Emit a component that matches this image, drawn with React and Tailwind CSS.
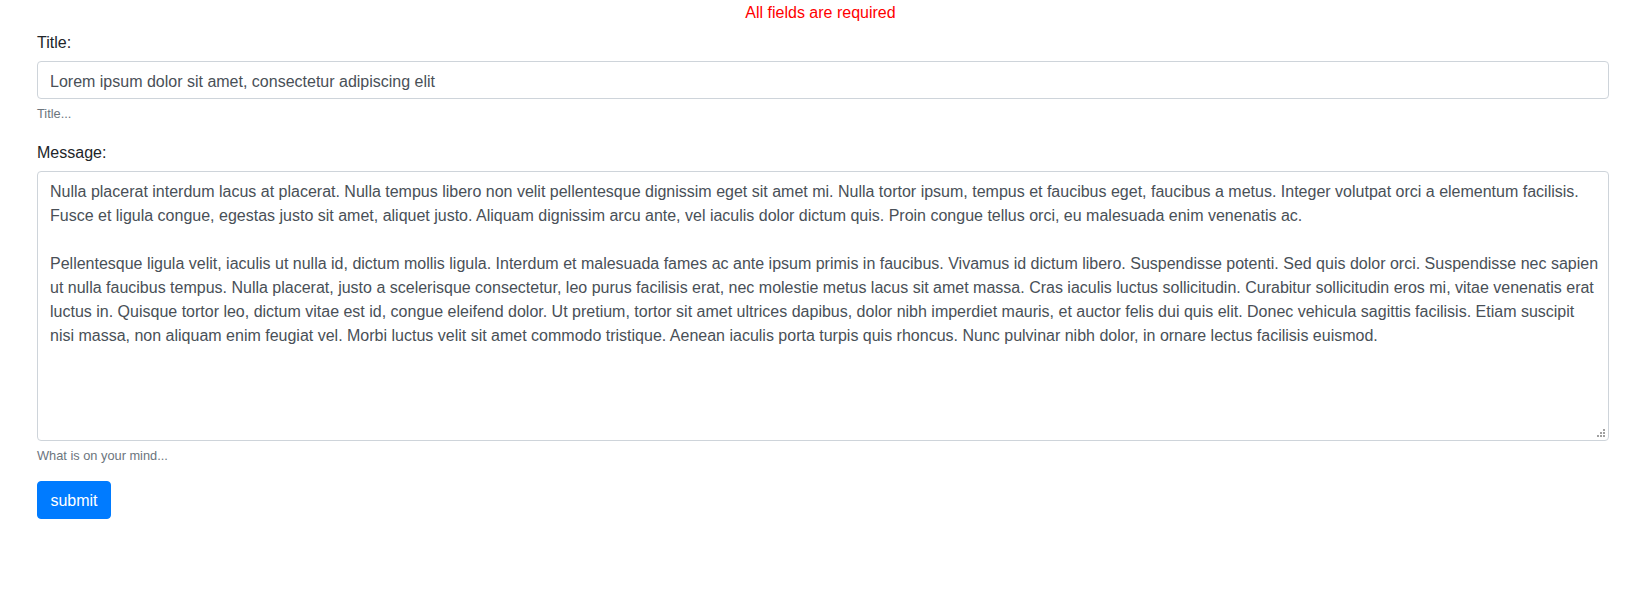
import { useState } from 'react';

const MESSAGE = [
    'Nulla placerat interdum lacus at placerat. Nulla tempus libero non velit pellentesque dignissim eget sit amet mi. Nulla tortor ipsum, tempus et faucibus eget, faucibus a metus. Integer volutpat orci a elementum facilisis.',
    'Fusce et ligula congue, egestas justo sit amet, aliquet justo. Aliquam dignissim arcu ante, vel iaculis dolor dictum quis. Proin congue tellus orci, eu malesuada enim venenatis ac.',
    '',
    'Pellentesque ligula velit, iaculis ut nulla id, dictum mollis ligula. Interdum et malesuada fames ac ante ipsum primis in faucibus. Vivamus id dictum libero. Suspendisse potenti. Sed quis dolor orci. Suspendisse nec sapien',
    'ut nulla faucibus tempus. Nulla placerat, justo a scelerisque consectetur, leo purus facilisis erat, nec molestie metus lacus sit amet massa. Cras iaculis luctus sollicitudin. Curabitur sollicitudin eros mi, vitae venenatis erat',
    'luctus in. Quisque tortor leo, dictum vitae est id, congue eleifend dolor. Ut pretium, tortor sit amet ultrices dapibus, dolor nibh imperdiet mauris, et auctor felis dui quis elit. Donec vehicula sagittis facilisis. Etiam suscipit',
    'nisi massa, non aliquam enim feugiat vel. Morbi luctus velit sit amet commodo tristique. Aenean iaculis porta turpis quis rhoncus. Nunc pulvinar nibh dolor, in ornare lectus facilisis euismod.',
].join('\n');

// Dotted resize grip, bottom-right corner of the textarea
const ResizeGrip = () => (
    <svg
        className="pointer-events-none absolute right-[3px] bottom-[3px]"
        width="9"
        height="9"
        viewBox="0 0 9 9"
        fill="#a0a0a0"
    >
        <rect x="6" y="0" width="2" height="2" />
        <rect x="3" y="3" width="2" height="2" />
        <rect x="6" y="3" width="2" height="2" />
        <rect x="0" y="6" width="2" height="2" />
        <rect x="3" y="6" width="2" height="2" />
        <rect x="6" y="6" width="2" height="2" />
    </svg>
);

// Contact form with validation message
const App = () => {
    const [title, setTitle] = useState('Lorem ipsum dolor sit amet, consectetur adipiscing elit');
    const [message, setMessage] = useState(MESSAGE);

    return (
        <div className="min-h-[615px] bg-white font-['Liberation_Sans',Arial,sans-serif] text-base text-[#212529]">
            <div className="h-[29px] pt-px text-center leading-6 text-[#ff0000]">All fields are required</div>

            <form className="pl-[37px] pr-[32px]" onSubmit={(e) => e.preventDefault()}>
                <div className="mb-4">
                    <label className="mb-1.5 block pt-0.5 leading-6">Title:</label>
                    <input
                        type="text"
                        value={title}
                        onChange={(e) => setTitle(e.target.value)}
                        className="block h-[38px] w-full rounded border border-[#ced4da] bg-white px-3 pt-2 pb-1 leading-6 text-[#495057] outline-none"
                    />
                    <small className="mt-1 block pt-px text-[12.8px] leading-[19.2px] text-[#6c757d]">Title...</small>
                </div>

                <div className="mb-4">
                    <label className="mb-1.5 block pt-0.5 leading-6">Message:</label>
                    <div className="relative">
                        <textarea
                            value={message}
                            onChange={(e) => setMessage(e.target.value)}
                            wrap="off"
                            className="block h-[270px] w-full resize-none overflow-hidden whitespace-pre rounded border border-[#ced4da] bg-white px-3 pt-2 pb-1 leading-6 text-[#495057] outline-none"
                        />
                        <ResizeGrip />
                    </div>
                    <small className="mt-1 block pt-px text-[12.8px] leading-[19.2px] text-[#6c757d]">What is on your mind...</small>
                </div>

                <button
                    type="submit"
                    className="h-[38px] w-[74px] rounded border border-[#007bff] bg-[#007bff] pt-0.5 leading-6 text-white"
                >
                    submit
                </button>
            </form>
        </div>
    );
};

export default App;
